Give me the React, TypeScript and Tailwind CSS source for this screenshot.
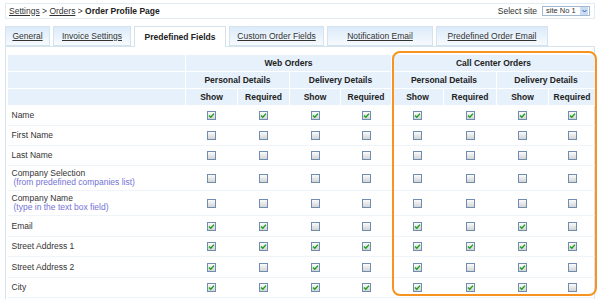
import React from "react";

type Field = { label: string; sub?: string; h: string; checks: boolean[] };

const fields: Field[] = [
  { label: "Name", h: "h-[20px]", checks: [true, true, true, true, true, true, true, true] },
  { label: "First Name", h: "h-[20px]", checks: [false, false, false, false, false, false, false, false] },
  { label: "Last Name", h: "h-[20px]", checks: [false, false, false, false, false, false, false, false] },
  {
    label: "Company Selection",
    sub: "(from predefined companies list)",
    h: "h-[25px]",
    checks: [false, false, false, false, false, false, false, false],
  },
  {
    label: "Company Name",
    sub: "(type in the text box field)",
    h: "h-[25px]",
    checks: [false, false, false, false, false, false, false, false],
  },
  { label: "Email", h: "h-[21px]", checks: [true, true, false, false, true, false, true, false] },
  { label: "Street Address 1", h: "h-[20px]", checks: [true, true, true, true, true, true, true, true] },
  { label: "Street Address 2", h: "h-[21px]", checks: [true, false, true, false, true, false, true, false] },
  { label: "City", h: "h-[20px]", checks: [true, true, true, true, true, true, true, false] },
];

const tabs = [
  { name: "General", w: "w-[45px]" },
  { name: "Invoice Settings", w: "w-[78px]" },
  { name: "Predefined Fields", w: "w-[92px]", active: true },
  { name: "Custom Order Fields", w: "w-[95px]" },
  { name: "Notification Email", w: "w-[106px]" },
  { name: "Predefined Order Email", w: "w-[112px]" },
];

function Box({ checked }: { checked: boolean }) {
  return (
    <span className="inline-flex w-[9px] h-[9px] border border-[#6f8db0] bg-gradient-to-b from-[#fbfbfb] to-[#d4d4d4] items-center justify-center align-middle">
      {checked && (
        <svg width="7" height="7" viewBox="0 0 7 7">
          <path d="M1 3.6 L2.8 5.3 L6 1.6" fill="none" stroke="#1ba01b" strokeWidth="1.4" />
        </svg>
      )}
    </span>
  );
}

const hd = "bg-[#e6f1fb] border border-white p-0 h-[17px] text-center font-bold text-[#222]";

export default function App() {
  return (
    <div className="w-[600px] h-[299px] bg-white overflow-hidden text-[8.5px] text-[#333] font-['Liberation_Sans',Arial,sans-serif]">
      {/* breadcrumb bar */}
      <div className="mx-[5px] mt-[3px] h-[16px] border border-[#e1ebf2] flex items-center justify-between pl-[3px] pr-[4px]">
        <div>
          <span className="underline">Settings</span> &gt; <span className="underline">Orders</span> &gt;{" "}
          <span className="font-bold text-[#222]">Order Profile Page</span>
        </div>
        <div className="flex items-center gap-[5px]">
          <span>Select site</span>
          <div className="flex items-center w-[48px] h-[10px] border border-[#a3b8d1] pl-[3px] pr-px">
            <span className="flex-1 leading-none text-[7.5px] whitespace-nowrap overflow-hidden">site No 1</span>
            <span className="w-[8px] h-[8px] shrink-0 bg-[#cadcf3] flex items-center justify-center">
              <svg width="5" height="4" viewBox="0 0 5 4">
                <path d="M0.5 1 L2.5 3 L4.5 1" fill="none" stroke="#3a5f98" strokeWidth="1" />
              </svg>
            </span>
          </div>
        </div>
      </div>

      {/* tabs */}
      <div className="flex gap-[3px] pl-[5px] mt-[7px] h-[21px] relative z-10">
        {tabs.map((t) => (
          <div
            key={t.name}
            className={
              t.active
                ? `${t.w} h-[21px] flex items-center justify-center bg-white border border-b-0 border-[#d5e3ee] font-bold text-[#222]`
                : `${t.w} h-[20px] flex items-center justify-center bg-gradient-to-b from-[#dcebf9] to-[#f6fafe] border border-[#d5e3ee] underline`
            }
          >
            {t.name}
          </div>
        ))}
      </div>

      {/* content panel */}
      <div className="mx-[5px] -mt-px border border-b-0 border-[#d5e3ee] pt-[7px] pl-px h-[260px]">
        <div className="relative w-[588px]">
          <table className="table-fixed border-collapse w-[588px]">
            <colgroup>
              <col className="w-[178px]" />
              <col className="w-[52px]" />
              <col className="w-[52px]" />
              <col className="w-[51px]" />
              <col className="w-[51px]" />
              <col className="w-[52px]" />
              <col className="w-[53px]" />
              <col className="w-[52px]" />
              <col className="w-[47px]" />
            </colgroup>
            <thead>
              <tr>
                <th className={hd}></th>
                <th className={hd} colSpan={4}>
                  Web Orders
                </th>
                <th className={hd} colSpan={4}>
                  Call Center Orders
                </th>
              </tr>
              <tr>
                <th className={hd}></th>
                <th className={hd} colSpan={2}>
                  Personal Details
                </th>
                <th className={hd} colSpan={2}>
                  Delivery Details
                </th>
                <th className={hd} colSpan={2}>
                  Personal Details
                </th>
                <th className={hd} colSpan={2}>
                  Delivery Details
                </th>
              </tr>
              <tr>
                <th className={hd}></th>
                {["Show", "Required", "Show", "Required", "Show", "Required", "Show", "Required"].map((s, i) => (
                  <th key={i} className={hd}>
                    {s}
                  </th>
                ))}
              </tr>
            </thead>
            <tbody>
              {fields.map((f) => (
                <tr key={f.label} className={`${f.h} border-b border-[#eff4f9]`}>
                  <td className="p-0 pl-[4px] leading-[9px]">
                    <div>{f.label}</div>
                    {f.sub && <div className="pl-[2px] text-[#7373d6]">{f.sub}</div>}
                  </td>
                  {f.checks.map((c, i) => (
                    <td key={i} className="p-0 text-center leading-none">
                      <Box checked={c} />
                    </td>
                  ))}
                </tr>
              ))}
            </tbody>
          </table>
          <div className="absolute left-[385px] top-[-3px] w-[205px] h-[245px] border-2 border-[#f7931e] rounded-[8px] pointer-events-none" />
        </div>
      </div>
    </div>
  );
}
